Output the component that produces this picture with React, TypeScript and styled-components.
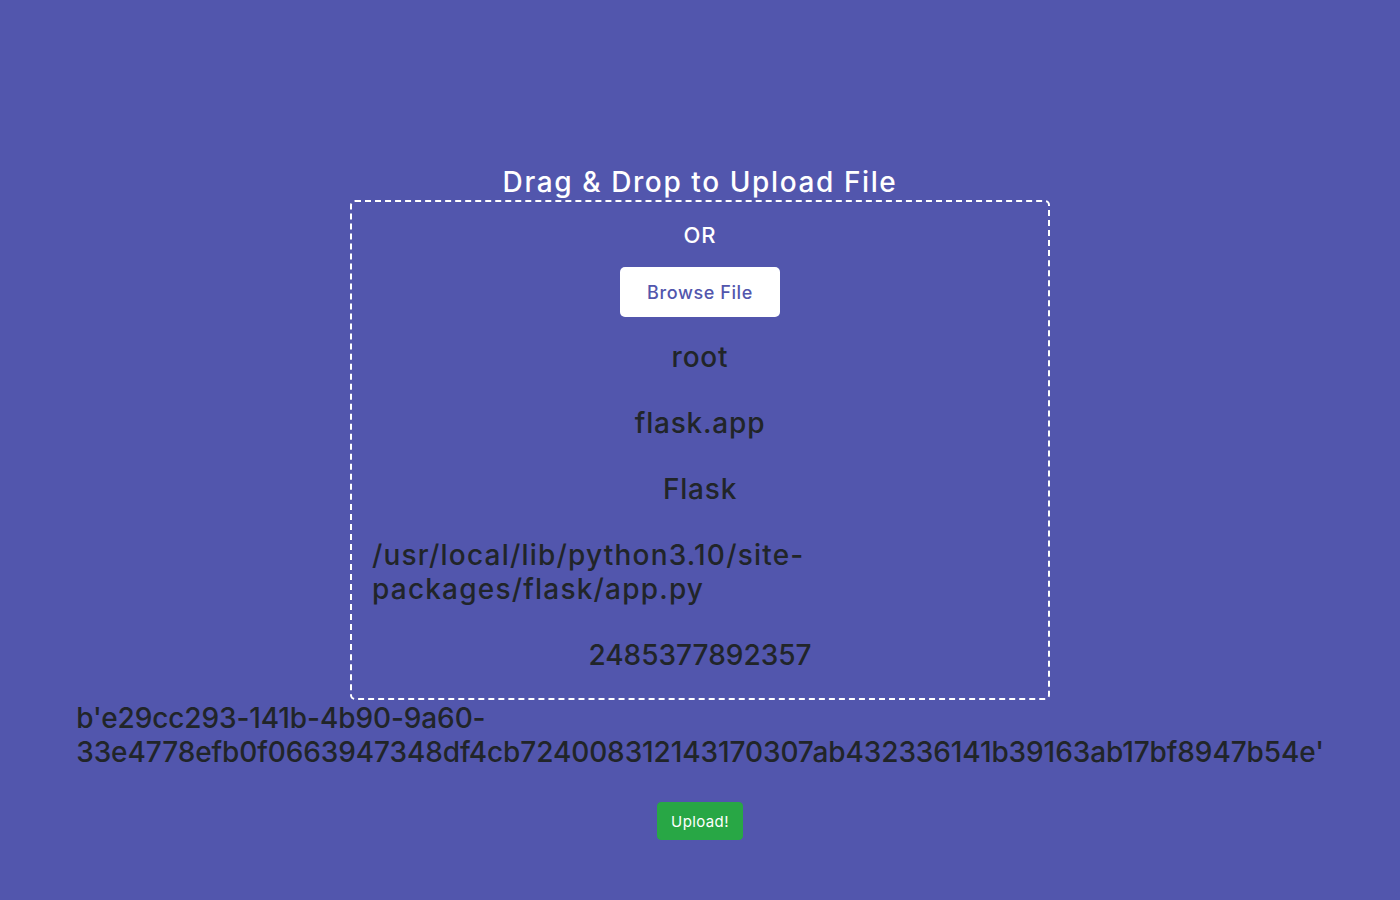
import styled, { createGlobalStyle } from "styled-components";

const GlobalStyle = createGlobalStyle`
  * { box-sizing: border-box; }
  body {
    margin: 0;
    background: #5256ad;
    font-family: Inter, "Noto Sans", sans-serif;
  }
`;

const Page = styled.div`
  min-height: 100vh;
  padding-top: 165px;
  display: flex;
  flex-direction: column;
  align-items: center;
`;

const Title = styled.h3`
  margin: 0;
  font-size: 28px;
  line-height: 35px;
  font-weight: 500;
  letter-spacing: 1.6px;
  color: #fff;
  position: relative;
  z-index: 1;
`;

const DropArea = styled.div`
  width: 700px;
  height: 500px;
  border: 2px dashed #fff;
  border-radius: 5px;
  padding: 20px;
  display: flex;
  flex-direction: column;
  align-items: center;
`;

const OrText = styled.span`
  font-size: 22px;
  line-height: 26px;
  font-weight: 500;
  letter-spacing: 1px;
  color: #fff;
`;

const BrowseButton = styled.button`
  margin-top: 19px;
  width: 160px;
  height: 50px;
  border: none;
  outline: none;
  border-radius: 5px;
  background: #fff;
  color: #5256ad;
  font-family: inherit;
  font-size: 18px;
  font-weight: 500;
  letter-spacing: 0.6px;
  cursor: pointer;
`;

const InfoList = styled.div`
  margin-top: 23px;
  align-self: stretch;
  display: flex;
  flex-direction: column;
  align-items: center;
  gap: 32px;
`;

const Info = styled.h3<{ $stretch?: boolean; $spacing?: number }>`
  margin: 0;
  font-size: 28px;
  line-height: 34px;
  font-weight: 500;
  letter-spacing: ${(p) => p.$spacing ?? 0.8}px;
  color: #212529;
  align-self: ${(p) => (p.$stretch ? "stretch" : "auto")};
  text-align: left;
`;

const Hash = styled(Info)`
  margin-top: 1px;
`;

const UploadButton = styled.button`
  margin-top: 33px;
  height: 38px;
  padding: 0 13px;
  border: 1px solid #28a745;
  border-radius: 4px;
  background: #28a745;
  color: #fff;
  font-family: inherit;
  font-size: 15px;
  font-weight: 400;
  letter-spacing: 0.4px;
  cursor: pointer;
`;

export default function App() {
  return (
    <>
      <GlobalStyle />
      <Page>
        <Title>Drag &amp; Drop to Upload File</Title>
        <DropArea>
          <OrText>OR</OrText>
          <BrowseButton>Browse File</BrowseButton>
          <InfoList>
            <Info>root</Info>
            <Info>flask.app</Info>
            <Info>Flask</Info>
            <Info $stretch $spacing={1.2}>
              /usr/local/lib/python3.10/site-
              <br />
              packages/flask/app.py
            </Info>
            <Info $spacing={0}>2485377892357</Info>
          </InfoList>
        </DropArea>
        <Hash $spacing={-0.1}>
          b'e29cc293-141b-4b90-9a60-
          <br />
          33e4778efb0f0663947348df4cb724008312143170307ab432336141b39163ab17bf8947b54e'
        </Hash>
        <UploadButton>Upload!</UploadButton>
      </Page>
    </>
  );
}
